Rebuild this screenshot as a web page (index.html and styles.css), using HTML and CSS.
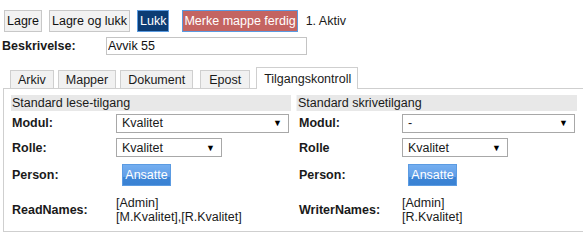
FILE: index.html
```html
<!DOCTYPE html>
<html lang="no">
<head>
    <meta charset="UTF-8">
    <meta name="viewport" content="width=device-width, initial-scale=1.0">
    <title>Tilgangskontroll</title>
    <link rel="stylesheet" href="styles.css">
</head>
<body>
    <div class="toolbar">
        <button class="btn">Lagre</button>
        <button class="btn">Lagre og lukk</button>
        <button class="btn btn-dark">Lukk</button>
        <button class="btn btn-red">Merke mappe ferdig</button>
        <span class="status">1. Aktiv</span>
    </div>

    <div class="desc-row">
        <label class="desc-label">Beskrivelse:</label>
        <input class="desc-input" type="text" value="Avvik 55">
    </div>

    <div class="tabs">
        <div class="tab">Arkiv</div>
        <div class="tab">Mapper</div>
        <div class="tab">Dokument</div>
        <div class="tab tab-epost">Epost</div>
        <div class="tab active">Tilgangskontroll</div>
    </div>

    <div class="panel">
        <div class="columns">
            <!-- Read access -->
            <div class="column">
                <div class="col-header">Standard lese-tilgang</div>
                <div class="row row-modul">
                    <span class="label">Modul:</span>
                    <div class="select wide"><span>Kvalitet</span><span class="arrow">▼</span></div>
                </div>
                <div class="row row-rolle">
                    <span class="label">Rolle:</span>
                    <div class="select narrow"><span>Kvalitet</span><span class="arrow">▼</span></div>
                </div>
                <div class="row row-person">
                    <span class="label">Person:</span>
                    <button class="btn-blue">Ansatte</button>
                </div>
                <div class="row row-names">
                    <span class="label">ReadNames:</span>
                    <div class="names">[Admin]<br>[M.Kvalitet],[R.Kvalitet]</div>
                </div>
            </div>

            <!-- Write access -->
            <div class="column column-right">
                <div class="col-header">Standard skrivetilgang</div>
                <div class="row row-modul">
                    <span class="label">Modul:</span>
                    <div class="select wide"><span>-</span><span class="arrow">▼</span></div>
                </div>
                <div class="row row-rolle">
                    <span class="label">Rolle</span>
                    <div class="select narrow"><span>Kvalitet</span><span class="arrow">▼</span></div>
                </div>
                <div class="row row-person">
                    <span class="label">Person:</span>
                    <button class="btn-blue">Ansatte</button>
                </div>
                <div class="row row-names">
                    <span class="label">WriterNames:</span>
                    <div class="names">[Admin]<br>[R.Kvalitet]</div>
                </div>
            </div>
        </div>
    </div>
</body>
</html>
```

FILE: styles.css
```css
/* General styling */
body {
    font-family: "Liberation Sans", Arial, sans-serif;
    font-size: 12.5px;
    color: #1a1a1a;
    margin: 0;
    padding: 10px 0 0 2px;
    background: #fff;
    overflow: hidden;
}

/* Toolbar */
.toolbar {
    display: flex;
    align-items: center;
    gap: 7px;
    margin-left: 2px;
}

.btn {
    font-family: inherit;
    font-size: 12.5px;
    height: 22px;
    line-height: 18px;
    padding: 1px 2px;
    border: 1px solid #c8c8c8;
    background-color: #f2f2f2;
    color: #111;
    cursor: pointer;
}

.btn-dark {
    background-color: #0c3c74;
    border-color: #5a9be0;
    color: #fff;
}

.btn-red {
    margin-left: 6px;
    padding: 1px 1px;
    background-color: #c46461;
    border-color: #5a9be0;
    color: #fff;
}

.status {
    margin-left: 1px;
}

/* Description */
.desc-row {
    display: flex;
    align-items: center;
    margin-top: 5px;
}

.desc-label {
    width: 104px;
    font-weight: bold;
}

.desc-input {
    font-family: inherit;
    font-size: 12.5px;
    width: 201px;
    height: 18px;
    box-sizing: border-box;
    padding: 0 1px;
    border: 1px solid #c4c4c4;
    color: #111;
}

/* Tabs */
.tabs {
    display: flex;
    align-items: flex-end;
    gap: 4px;
    margin-top: 12px;
    padding-left: 8px;
}

.tab {
    height: 17px;
    line-height: 18px;
    padding: 0 7px;
    border: 1px solid #cfcfcf;
    border-bottom: none;
    background-color: #f1f1f1;
}

.tab-epost {
    margin-left: 3px;
    padding: 0 8px;
}

.tab.active {
    height: 21px;
    line-height: 22px;
    padding: 0 6px 0 7px;
    background-color: #fff;
    margin-bottom: -1px;
    margin-left: 2px;
    position: relative;
}

/* Panel */
.panel {
    margin-left: 1px;
    padding: 6px 0 1px 7px;
    border: 1px solid #cfcfcf;
    border-right: none;
}

.columns {
    display: grid;
    grid-template-columns: 280px 281px;
    column-gap: 5px;
}

.col-header {
    height: 16px;
    line-height: 16px;
    padding-left: 1px;
    background-color: #e8e8e8;
}

.column-right .col-header {
    border-left: 1px solid #f4f4f4;
}

.row {
    display: flex;
    align-items: center;
}

.row-modul { height: 24px; }
.row-rolle { height: 25px; }
.row-person { height: 30px; }
.row-names { height: 40px; }

.label {
    width: 104px;
    padding-left: 1px;
    font-weight: bold;
    flex-shrink: 0;
}

.column-right .label {
    width: 103px;
    padding-left: 3px;
}

.select {
    display: flex;
    justify-content: space-between;
    align-items: center;
    height: 19px;
    box-sizing: border-box;
    padding: 0 6px 0 5px;
    border: 1px solid #a8a8a8;
    background-color: #fff;
}

.select.wide { width: 173px; }
.select.narrow { width: 106px; }

.arrow {
    font-size: 9px;
    color: #000;
}

.btn-blue {
    margin-left: 6px;
    width: 49px;
    height: 22px;
    padding: 0;
    font-family: inherit;
    font-size: 12.5px;
    color: #fff;
    border: 1px solid #5b9be2;
    background: linear-gradient(#74aef0 0%, #5f9de6 62%, #3c84d6 62%, #3a82d3 100%);
    cursor: pointer;
}

.names {
    line-height: 14px;
    margin-top: -1px;
}
```
